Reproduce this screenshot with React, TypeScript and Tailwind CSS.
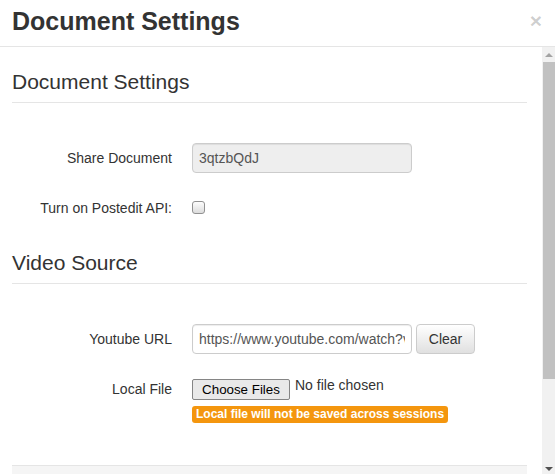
// Document settings modal: header, scrollable form body, faux scrollbar

function Legend({ children, className = '' }: { children: string; className?: string }) {
    return (
        <div className={`text-[21px] leading-[30px] pt-[2px] pb-[5px] border-b border-[#e5e5e5] text-[#333] ${className}`}>
            {children}
        </div>
    );
}

function Row({ label, children, className = '' }: { label: string; children: React.ReactNode; className?: string }) {
    return (
        <div className={`flex items-center h-[30px] ${className}`}>
            <div className="w-[160px] shrink-0 text-right text-[14px] text-[#333]">{label}</div>
            <div className="ml-[20px] flex items-center">{children}</div>
        </div>
    );
}

function Arrow({ up, color }: { up?: boolean; color: string }) {
    return (
        <svg width="8" height="4" viewBox="0 0 8 4">
            <path d={up ? 'M0 4 L4 0 L8 4 Z' : 'M0 0 L8 0 L4 4 Z'} fill={color} />
        </svg>
    );
}

export default function App() {
    return (
        <div className="w-[555px] h-[474px] bg-white overflow-hidden flex flex-col font-['Liberation_Sans',Arial,sans-serif] text-[#333]">
            {/* 헤더 */}
            <div className="h-[47px] shrink-0 border-b border-[#e5e5e5] flex items-start justify-between pl-[12px] pr-[13px]">
                <h4 className="pt-[8px] text-[25px] leading-[26px] font-bold text-[#333]">Document Settings</h4>
                <button className="mt-[10px] text-[21px] leading-[21px] font-bold text-black/20">×</button>
            </div>

            {/* 본문 + 스크롤바 */}
            <div className="flex-1 flex min-h-0">
                <div className="flex-1 overflow-hidden pl-[12px] pr-[15px]">
                    <Legend className="mt-[18px]">Document Settings</Legend>

                    <Row label="Share Document" className="mt-[40px]">
                        <input
                            readOnly
                            value="3qtzbQdJ"
                            className="w-[220px] h-[30px] pl-[6px] pr-[6px] text-[14px] text-[#555] bg-[#eee] border border-[#ccc] rounded-[4px] shadow-[inset_0_1px_1px_rgba(0,0,0,0.075)] outline-none font-['Liberation_Sans',Arial,sans-serif]"
                        />
                    </Row>

                    <Row label="Turn on Postedit API:" className="mt-[20px]">
                        <span className="block w-[13px] h-[13px] -mt-[2px] rounded-[3px] border border-[#919191] bg-linear-to-b from-[#fdfdfd] to-[#dcdcdc]" />
                    </Row>

                    <Legend className="mt-[23px]">Video Source</Legend>

                    <Row label="Youtube URL" className="mt-[40px]">
                        <input
                            readOnly
                            value="https://www.youtube.com/watch?v=dQw4w9WgXcQ"
                            className="w-[220px] h-[30px] pl-[6px] pr-[6px] text-[14px] text-[#555] bg-white border border-[#ccc] rounded-[4px] shadow-[inset_0_1px_1px_rgba(0,0,0,0.075)] outline-none font-['Liberation_Sans',Arial,sans-serif]"
                        />
                        <button className="ml-[4px] w-[59px] h-[30px] text-[14px] text-[#333] border border-[#ccc] rounded-[4px] bg-linear-to-b from-white to-[#e0e0e0] shadow-[0_1px_0_rgba(255,255,255,0.15)]">
                            Clear
                        </button>
                    </Row>

                    {/* 로컬 파일 */}
                    <div className="mt-[25px] flex items-start">
                        <div className="w-[160px] shrink-0 text-right text-[14px] leading-[21px] text-[#333]">Local File</div>
                        <div className="ml-[20px] flex flex-col items-start">
                            <div className="flex items-start">
                                <span className="w-[98px] h-[21px] flex items-center justify-center text-[13.33px] text-black bg-[#e9e9e9] border border-[#858585] rounded-[2px]">
                                    Choose Files
                                </span>
                                <span className="ml-[5px] -mt-[2px] text-[14px] leading-[16px] text-[#333]">No file chosen</span>
                            </div>
                            <span className="mt-[6px] px-[4px] h-[17px] leading-[17px] text-[12px] font-bold text-white bg-[#f4960e] rounded-[3px] whitespace-nowrap">
                                Local file will not be saved across sessions
                            </span>
                        </div>
                    </div>

                    <div className="mt-[42px] h-[40px] border-t border-[#e5e5e5] bg-[#f5f5f5]" />
                </div>

                {/* 스크롤바 */}
                <div className="w-[13px] shrink-0 bg-[#f1f1f1] flex flex-col">
                    <div className="h-[15px] flex items-center justify-center">
                        <Arrow up color="#a3a3a3" />
                    </div>
                    <div className="ml-[1px] h-[317px] bg-[#c1c1c1]" />
                    <div className="flex-1" />
                    <div className="h-[7px] flex items-start justify-center">
                        <Arrow color="#505050" />
                    </div>
                </div>
            </div>
        </div>
    );
}
